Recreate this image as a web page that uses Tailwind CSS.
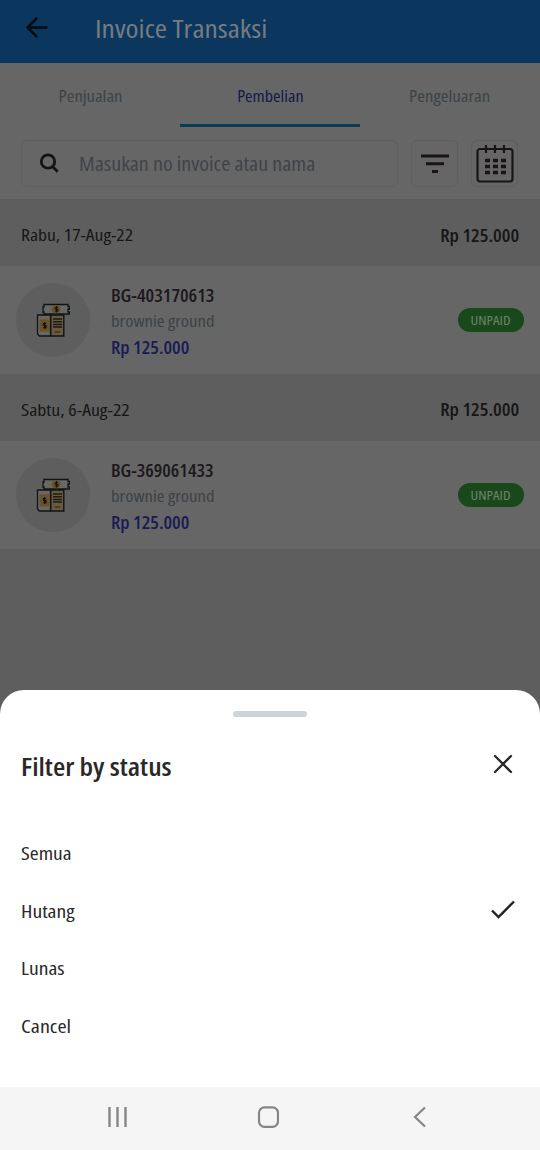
<!DOCTYPE html>
<html lang="id">
<head>
<meta charset="utf-8">
<meta name="viewport" content="width=device-width, initial-scale=1">
<title>Invoice Transaksi</title>
<script src="https://cdn.jsdelivr.net/npm/@tailwindcss/browser@4"></script>
</head>
<body class="h-[1150px] w-[540px] overflow-hidden bg-[#5e5e5e] font-['Open_Sans','Noto_Sans',sans-serif] [font-stretch:75%] text-[#161616]">
<svg class="hidden">
  <symbol id="invoice" viewBox="0 0 34 34">
    <path d="M8 1.500h24v2h1.500v2.500H32v3h1.500V11H8V9H7V4h1z" fill="#686865" stroke="#0e1416" stroke-width="1.300"/>
    <ellipse cx="20" cy="6.300" rx="4.500" ry="4" fill="#69512a"/>
    <path d="M22 4.500h-2.800V6.300H22v1.900h-3M20.500 3v6.500" fill="none" stroke="#17130c"/>
    <path d="M1.500 12h13v21h-11l-2-2z" fill="#6a6762" stroke="#0e1416" stroke-width="1.300"/>
    <path d="M3.500 16.500h10v12h-10z" fill="#69512a"/>
    <path d="M10 20.500H7.500v2H10v2.200H7.300M8.700 19v7" fill="none" stroke="#17130c" stroke-width="1.200"/>
    <path d="M14.800 12h13v21h-13z" fill="#665a42" stroke="#0e1416" stroke-width="1.400"/>
    <path d="M17 16h9M17 18.700h9M17 21.400h9M17 24.100h9" stroke="#211a0e" stroke-width="1.500"/>
    <path d="M18.500 29h6" stroke="#4a3415" stroke-width="1.500"/>
  </symbol>
</svg>
<div class="flex h-full flex-col">
  <header class="flex h-[63px] shrink-0 items-center bg-[#0b365d] pb-2">
    <svg class="ml-[25px] h-6 w-6" viewBox="0 0 24 24" fill="none" stroke="#070b12" stroke-width="2.500" stroke-linecap="round" stroke-linejoin="round"><path d="M21.500 11.500H2.500M11.500 2.500l-9 9 9 9"/></svg>
    <h1 class="ml-[46px] origin-left scale-x-[1.18] whitespace-nowrap text-[25px] leading-8 text-[#777b80]">Invoice Transaksi</h1>
  </header>

  <nav class="grid h-16 shrink-0 grid-cols-3 bg-[#666] text-center text-[16px] leading-[67px] text-[#3c4246]">
    <div class="h-16"><span class="inline-block scale-x-[1.16]">Penjualan</span></div>
    <div class="h-16 border-b-[3px] border-[#083e55] text-[#17174d]"><span class="inline-block scale-x-[1.13]">Pembelian</span></div>
    <div class="h-16"><span class="inline-block scale-x-[1.17]">Pengeluaran</span></div>
  </nav>

  <div class="flex h-[73px] shrink-0 items-start border-b border-[#5a5a5a] bg-[#666] pl-[21px] pt-[13px]">
    <div class="flex h-[47px] w-[377px] items-center rounded-md border border-[#5d5f62]">
      <svg class="ml-[17px] h-[21px] w-[21px]" viewBox="0 0 21 21" fill="none" stroke="#141414" stroke-width="2.800"><circle cx="9" cy="8.500" r="6.700"/><path d="M14 14l4.700 4.700"/></svg>
      <span class="ml-[19px] origin-left scale-x-[1.105] pt-px text-[20px] text-[#3f4349]">Masukan no invoice atau nama</span>
    </div>
    <div class="ml-[13px] flex h-[47px] w-[47px] items-center justify-center rounded-md border border-[#5d5f62]">
      <svg class="h-5 w-7" viewBox="0 0 28 20" stroke="#1a1416" stroke-width="3"><path d="M0 2h28M5 9.800h18M11 17.500h6"/></svg>
    </div>
    <div class="ml-[13px] flex h-[47px] w-[47px] items-center justify-center rounded-md border border-[#5d5f62]">
      <svg class="h-[38px] w-[38px]" viewBox="0 0 38 38" fill="none" stroke="#1a1416" stroke-width="2.200"><rect x="1.500" y="4" width="35" height="32.500" rx="2.500"/><path d="M10 0v8M19 0v8M28 0v8"/><path d="M9 15.500h21M9 21.500h21M9 27.500h21" stroke-width="3.300" stroke-dasharray="5 3"/></svg>
    </div>
  </div>

  <main class="flex shrink-0 flex-col">
    <div class="flex h-[66px] items-center justify-between bg-[#5e5e5e] px-[21px] pt-1">
      <span class="origin-left scale-x-[1.155] text-[17px]">Rabu, 17-Aug-22</span><span class="origin-right scale-x-[1.08] text-[18px] font-semibold">Rp 125.000</span>
    </div>
    <div class="flex h-[108px] items-center bg-[#666] px-4">
      <div class="flex h-[74px] w-[74px] items-center justify-center rounded-full bg-[#5e5e5e]"><svg class="h-[34px] w-[34px]"><use href="#invoice"/></svg></div>
      <div class="ml-[21px] pt-0.5 leading-[26px]">
        <p class="origin-left scale-x-[1.07] text-[18px] font-semibold text-[#1c181c]">BG-403170613</p>
        <p class="origin-left scale-x-[1.1] text-[17px] text-[#3c4246]">brownie ground</p>
        <p class="origin-left scale-x-[1.07] text-[18px] font-semibold text-[#1a1b54]">Rp 125.000</p>
      </div>
      <div class="ml-auto flex h-6 w-[66px] items-center justify-center rounded-full bg-[#19481b] pt-0.5 text-[13px] text-[#6f8270]"><span class="scale-x-[1.14]">UNPAID</span></div>
    </div>
    <div class="flex h-[67px] items-center justify-between bg-[#5e5e5e] px-[21px] pt-1">
      <span class="origin-left scale-x-[1.165] text-[17px]">Sabtu, 6-Aug-22</span><span class="origin-right scale-x-[1.08] text-[18px] font-semibold">Rp 125.000</span>
    </div>
    <div class="flex h-[108px] items-center bg-[#666] px-4">
      <div class="flex h-[74px] w-[74px] items-center justify-center rounded-full bg-[#5e5e5e]"><svg class="h-[34px] w-[34px]"><use href="#invoice"/></svg></div>
      <div class="ml-[21px] pt-0.5 leading-[26px]">
        <p class="origin-left scale-x-[1.06] text-[18px] font-semibold text-[#1c181c]">BG-369061433</p>
        <p class="origin-left scale-x-[1.1] text-[17px] text-[#3c4246]">brownie ground</p>
        <p class="origin-left scale-x-[1.07] text-[18px] font-semibold text-[#1a1b54]">Rp 125.000</p>
      </div>
      <div class="ml-auto flex h-6 w-[66px] items-center justify-center rounded-full bg-[#19481b] pt-0.5 text-[13px] text-[#6f8270]"><span class="scale-x-[1.14]">UNPAID</span></div>
    </div>
  </main>

  <section class="mt-auto flex h-[397px] shrink-0 flex-col rounded-t-[24px] bg-white text-[#2a2828]">
    <div class="mx-auto mt-[21px] h-[6px] w-[74px] shrink-0 rounded-sm bg-[#cdd3da]"></div>
    <div class="mt-[28px] flex h-10 items-center justify-between pl-[21px] pr-[27px]">
      <h2 class="origin-left scale-x-[1.13] pt-0.5 text-[25px] font-semibold leading-9">Filter by status</h2>
      <svg class="mb-0.5 h-5 w-5" viewBox="0 0 20 20" stroke="#2a2828" stroke-width="2.300" stroke-linecap="round"><path d="M2 2l16 16M18 2L2 18"/></svg>
    </div>
    <ul class="mt-[40px] text-[18px]">
      <li class="flex h-[57.500px] items-center pl-[21px]"><span class="origin-left scale-x-[1.19]">Semua</span></li>
      <li class="flex h-[57.500px] items-center justify-between pl-[21px] pr-[25px]"><span class="origin-left scale-x-[1.2]">Hutang</span>
        <svg class="mb-0.5 h-5 w-6" viewBox="0 0 24 20" fill="none" stroke="#222" stroke-width="2.400"><path d="M1 10.500l6.500 6.500L23 1.500"/></svg>
      </li>
      <li class="flex h-[57.500px] items-center pl-[21px]"><span class="origin-left scale-x-[1.2]">Lunas</span></li>
      <li class="flex h-[57.500px] items-center pl-[21px]"><span class="origin-left scale-x-[1.23]">Cancel</span></li>
    </ul>
  </section>

  <footer class="flex h-[63px] shrink-0 items-start bg-[#f5f5f5] pl-[107px] pt-[19px]">
    <svg class="h-[22px] w-[22px]" viewBox="0 0 22 22" stroke="#858585" stroke-width="2.400"><path d="M2.500 1v20M10.500 1v20M18.500 1v20"/></svg>
    <svg class="ml-[128px] h-[22px] w-[22px]" viewBox="0 0 22 22" fill="none" stroke="#858585" stroke-width="2.200"><rect x="2" y="1.300" width="19" height="19.500" rx="5.500"/></svg>
    <svg class="ml-[133px] h-[22px] w-[16px]" viewBox="0 0 16 22" fill="none" stroke="#858585" stroke-width="2.200"><path d="M13 1.500L3 11l10 9.500"/></svg>
  </footer>
</div>
</body>
</html>
